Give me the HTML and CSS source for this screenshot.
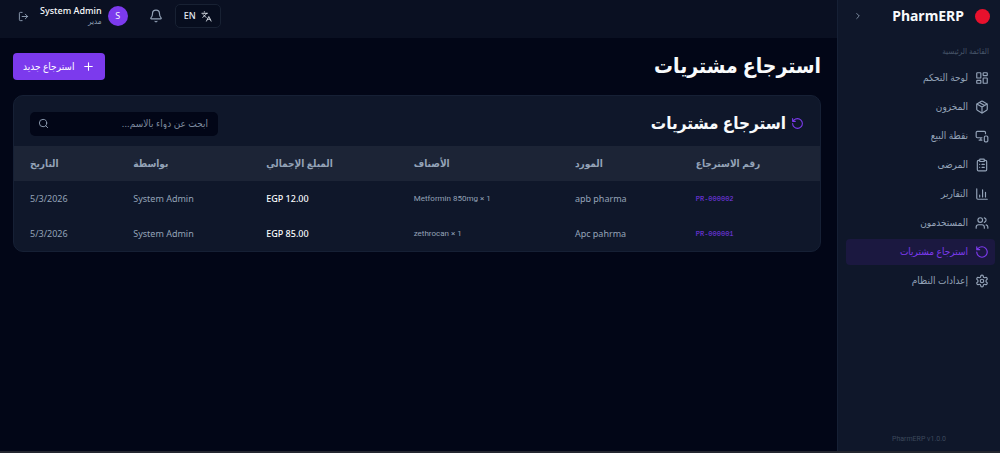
FILE: index.html
```html
<!DOCTYPE html>
<html lang="ar" dir="rtl">
<head>
<meta charset="utf-8">
<meta name="viewport" content="width=device-width, initial-scale=1">
<title>PharmERP</title>
<link rel="stylesheet" href="styles.css">
</head>
<body>
<div class="app">
  <aside class="sidebar">
    <div class="brand">
      <span class="brand-mark"></span>
      <span class="brand-name">PharmERP</span>
      <button class="icon-button collapse" type="button" aria-label="طي القائمة"><svg class="icon" viewBox="0 0 24 24"><path d="m9 18 6-6-6-6"/></svg></button>
    </div>
    <nav class="nav">
      <p class="nav-label">القائمة الرئيسية</p>
      <a class="nav-item" href="#"><svg class="icon" viewBox="0 0 24 24"><rect x="3" y="3" width="7" height="9" rx="1"/><rect x="14" y="3" width="7" height="5" rx="1"/><rect x="14" y="12" width="7" height="9" rx="1"/><rect x="3" y="16" width="7" height="5" rx="1"/></svg>لوحة التحكم</a>
      <a class="nav-item" href="#"><svg class="icon" viewBox="0 0 24 24"><path d="M11 21.7a2 2 0 0 0 2 0l7-4A2 2 0 0 0 21 16V8a2 2 0 0 0-1-1.7l-7-4a2 2 0 0 0-2 0l-7 4A2 2 0 0 0 3 8v8a2 2 0 0 0 1 1.7z"/><path d="M12 22V12M3.3 7 12 12l8.700-5M7.500 4.300l9 5.100"/></svg>المخزون</a>
      <a class="nav-item" href="#"><svg class="icon" viewBox="0 0 24 24"><path d="M18 8V6a2 2 0 0 0-2-2H4a2 2 0 0 0-2 2v7a2 2 0 0 0 2 2h8M10 19v-4M7 19h5"/><rect x="16" y="12" width="6" height="10" rx="2"/></svg>نقطة البيع</a>
      <a class="nav-item" href="#"><svg class="icon" viewBox="0 0 24 24"><rect x="8" y="2" width="8" height="4" rx="1"/><path d="M16 4h2a2 2 0 0 1 2 2v14a2 2 0 0 1-2 2H6a2 2 0 0 1-2-2V6a2 2 0 0 1 2-2h2M12 11h4M12 16h4M8 11h.01M8 16h.01"/></svg>المرضى</a>
      <a class="nav-item" href="#"><svg class="icon" viewBox="0 0 24 24"><path d="M3 3v16a2 2 0 0 0 2 2h16M8 17v-3M13 17V5M18 17V9"/></svg>التقارير</a>
      <a class="nav-item" href="#"><svg class="icon" viewBox="0 0 24 24"><path d="M16 21v-2a4 4 0 0 0-4-4H6a4 4 0 0 0-4 4v2M22 21v-2a4 4 0 0 0-3-3.870M16 3.130a4 4 0 0 1 0 7.750"/><circle cx="9" cy="7" r="4"/></svg>المستخدمون</a>
      <a class="nav-item active" href="#" aria-current="page"><svg class="icon" viewBox="0 0 24 24"><path d="M3 12a9 9 0 1 0 9-9 9.750 9.750 0 0 0-6.740 2.740L3 8M3 3v5h5"/></svg>استرجاع مشتريات</a>
      <a class="nav-item" href="#"><svg class="icon" viewBox="0 0 24 24"><path d="M12.220 2h-.44a2 2 0 0 0-2 2v.18a2 2 0 0 1-1 1.730l-.43.25a2 2 0 0 1-2 0l-.15-.08a2 2 0 0 0-2.730.73l-.22.38a2 2 0 0 0 .73 2.730l.15.1a2 2 0 0 1 1 1.720v.51a2 2 0 0 1-1 1.740l-.15.09a2 2 0 0 0-.73 2.730l.22.38a2 2 0 0 0 2.730.73l.15-.08a2 2 0 0 1 2 0l.43.25a2 2 0 0 1 1 1.730V20a2 2 0 0 0 2 2h.44a2 2 0 0 0 2-2v-.18a2 2 0 0 1 1-1.730l.43-.25a2 2 0 0 1 2 0l.15.08a2 2 0 0 0 2.730-.73l.22-.39a2 2 0 0 0-.73-2.730l-.15-.08a2 2 0 0 1-1-1.740v-.5a2 2 0 0 1 1-1.740l.15-.09a2 2 0 0 0 .73-2.730l-.22-.38a2 2 0 0 0-2.730-.73l-.15.08a2 2 0 0 1-2 0l-.43-.25a2 2 0 0 1-1-1.730V4a2 2 0 0 0-2-2z"/><circle cx="12" cy="12" r="3"/></svg>إعدادات النظام</a>
    </nav>
    <footer class="version" dir="ltr">PharmERP v1.0.0</footer>
  </aside>

  <div class="content">
    <header class="topbar">
      <button class="language" type="button"><svg class="icon" viewBox="0 0 24 24"><path d="m5 8 6 6M4 14l6-6 2-3M2 5h12M7 2h1M22 22l-5-10-5 10M14 18h6"/></svg>EN</button>
      <button class="icon-button bell" type="button" aria-label="الإشعارات"><svg class="icon" viewBox="0 0 24 24"><path d="M10.300 21a2 2 0 0 0 3.400 0M3.300 15.300A1 1 0 0 0 4 17h16a1 1 0 0 0 .7-1.700C19.400 14 18 12.500 18 8A6 6 0 0 0 6 8c0 4.500-1.400 6-2.700 7.300"/></svg></button>
      <div class="user">
        <span class="avatar">S</span>
        <div class="user-text"><span class="user-name">System Admin</span><span class="user-role">مدير</span></div>
      </div>
      <button class="icon-button logout" type="button" aria-label="تسجيل الخروج"><svg class="icon" viewBox="0 0 24 24"><path d="M9 21H5a2 2 0 0 1-2-2V5a2 2 0 0 1 2-2h4M16 17l5-5-5-5M21 12H9"/></svg></button>
    </header>

    <main class="page">
      <div class="page-head">
        <h1 class="page-title">استرجاع مشتريات</h1>
        <button class="primary" type="button"><svg class="icon" viewBox="0 0 24 24"><path d="M5 12h14M12 5v14"/></svg>استرجاع جديد</button>
      </div>
      <section class="card">
        <div class="card-head">
          <h2 class="card-title"><svg class="icon" viewBox="0 0 24 24"><path d="M3 12a9 9 0 1 0 9-9 9.750 9.750 0 0 0-6.740 2.740L3 8M3 3v5h5"/></svg>استرجاع مشتريات</h2>
          <label class="search"><input class="search-input" type="search" placeholder="ابحث عن دواء بالاسم..." aria-label="ابحث عن دواء بالاسم"><svg class="icon" viewBox="0 0 24 24"><circle cx="11" cy="11" r="8"/><path d="m21 21-4.300-4.300"/></svg></label>
        </div>
        <table class="returns">
          <colgroup><col class="col-number"><col class="col-supplier"><col class="col-items"><col class="col-total"><col class="col-by"><col class="col-date"></colgroup>
          <thead>
            <tr><th scope="col">رقم الاسترجاع</th><th scope="col">المورد</th><th scope="col">الأصناف</th><th scope="col">المبلغ الإجمالي</th><th scope="col">بواسطة</th><th scope="col">التاريخ</th></tr>
          </thead>
          <tbody>
            <tr><td class="number">PR-000002</td><td>apb pharma</td><td class="items"><bdi>Metformin 850mg × 1</bdi></td><td class="total"><bdi>EGP 12.00</bdi></td><td>System Admin</td><td><bdi dir="ltr">5/3/2026</bdi></td></tr>
            <tr><td class="number">PR-000001</td><td>Apc pahrma</td><td class="items"><bdi>zethrocan × 1</bdi></td><td class="total"><bdi>EGP 85.00</bdi></td><td>System Admin</td><td><bdi dir="ltr">5/3/2026</bdi></td></tr>
          </tbody>
        </table>
      </section>
    </main>
  </div>
</div>
</body>
</html>
```
FILE: styles.css
```css
:root {
  --bg: #020617;
  --panel: #0f172a;
  --line: #162035;
  --muted: #94a3b8;
  --dim: #475569;
  --accent: #7c3aed;
  --latin: "Noto Sans", sans-serif;
}

* { box-sizing: border-box; }

body {
  margin: 0;
  background: var(--bg);
  color: #f8fafc;
  font: 10px/14px Roboto, "DejaVu Sans Condensed", "DejaVu Sans", sans-serif;
}

button, input { font: inherit; color: inherit; }
button { cursor: pointer; }
h1, h2, p { margin: 0; }

.icon {
  width: 14px;
  height: 14px;
  flex: none;
  fill: none;
  stroke: currentColor;
  stroke-width: 2;
  stroke-linecap: round;
  stroke-linejoin: round;
}

.app {
  display: flex;
  min-height: 100vh;
  border-bottom: 2px solid #23262f;
}

.sidebar {
  display: flex;
  flex-direction: column;
  flex: 0 0 163px;
  background: var(--panel);
  border-left: 1px solid var(--line);
}

.brand {
  display: flex;
  align-items: center;
  gap: 11px;
  height: 32px;
  padding: 0 10px 0 15px;
}
.brand-mark {
  width: 15px;
  height: 15px;
  border-radius: 50%;
  background: #e8112d;
}
.brand-name { font: 700 14px/20px var(--latin); }

.icon-button {
  display: flex;
  padding: 0;
  border: 0;
  background: none;
  color: var(--muted);
}
.collapse { margin-right: auto; }
.collapse .icon { width: 10px; height: 10px; }

.nav {
  display: flex;
  flex-direction: column;
  gap: 3px;
  padding: 13px 5px 0 8px;
}
.nav-label {
  padding: 0 6px 3px;
  color: var(--dim);
  font-size: 8px;
}
.nav-item {
  display: flex;
  align-items: center;
  gap: 7px;
  height: 26px;
  padding: 0 6px;
  border-radius: 4px;
  color: var(--muted);
  text-decoration: none;
}
.nav-item.active { background: #1b1840; color: var(--accent); }

.version {
  margin-top: auto;
  padding-bottom: 5px;
  color: #3d495c;
  font-size: 7px;
  text-align: center;
}

.content { flex: 1; min-width: 0; }

.topbar {
  display: flex;
  align-items: center;
  height: 38px;
  padding: 0 16px 6px 18px;
  background: #0a1022;
}
.language {
  display: flex;
  align-items: center;
  gap: 5px;
  height: 24px;
  margin-right: auto;
  padding: 0 8px;
  border: 1px solid #182133;
  border-radius: 5px;
  background: #070d1e;
  color: #e2e8f0;
  font: 500 9px/14px var(--latin);
}
.language .icon { width: 11px; height: 11px; }
.bell { margin-right: 12px; }
.user {
  display: flex;
  align-items: center;
  gap: 6px;
  margin-right: 21px;
}
.avatar {
  display: grid;
  place-items: center;
  width: 20px;
  height: 20px;
  border-radius: 50%;
  background: var(--accent);
  font: 9px/14px var(--latin);
}
.user-text { display: flex; flex-direction: column; }
.user-name { font: 500 9px/12px var(--latin); }
.user-role { color: var(--muted); font-size: 8px; line-height: 10px; }
.logout { margin-right: 11px; }
.logout .icon { width: 11px; height: 11px; }

.page { padding: 15px 16px 15px 13px; }
.page-head {
  display: flex;
  align-items: center;
  justify-content: space-between;
  margin-bottom: 15px;
}
.page-title { font-size: 21px; line-height: 27px; font-weight: 700; }
.primary {
  display: flex;
  align-items: center;
  gap: 8px;
  height: 27px;
  padding: 0 10px;
  border: 0;
  border-radius: 4px;
  background: var(--accent);
  color: #fff;
  font-weight: 500;
}
.primary .icon { width: 13px; height: 13px; }

.card {
  overflow: hidden;
  background: var(--panel);
  border: 1px solid var(--line);
  border-radius: 10px;
}
.card-head {
  display: flex;
  align-items: center;
  justify-content: space-between;
  padding: 14px 16px 9px;
}
.card-title {
  display: flex;
  align-items: center;
  gap: 5px;
  font-size: 17px;
  line-height: 27px;
  font-weight: 700;
}
.card-title .icon { width: 13px; height: 13px; color: var(--accent); }

.search {
  display: flex;
  align-items: center;
  width: 188px;
  height: 24px;
  padding: 0 10px 0 8px;
  border-radius: 5px;
  background: var(--bg);
  color: var(--muted);
}
.search-input {
  flex: 1;
  min-width: 0;
  padding: 0;
  border: 0;
  outline: 0;
  background: none;
}
.search-input::placeholder { color: #7c899d; opacity: 1; }
.search .icon { width: 11px; height: 11px; }

.returns {
  width: 100%;
  table-layout: fixed;
  border-collapse: collapse;
}
.col-number { width: 17.4%; }
.col-supplier { width: 15%; }
.col-items { width: 20%; }
.col-total { width: 18.3%; }
.col-by { width: 16.5%; }
.col-date { width: 12.8%; }
.returns th {
  height: 35px;
  padding: 0 16px;
  background: #1c2436;
  color: var(--muted);
  text-align: left;
  font-weight: 700;
}
.returns td {
  height: 35px;
  padding: 0 16px;
  color: var(--muted);
  font: 9px/14px var(--latin);
  text-align: left;
  white-space: nowrap;
}
.returns .number {
  color: var(--accent);
  font-family: "Liberation Mono", monospace;
  font-size: 7px;
}
.returns .items { font: 8px/14px Roboto, sans-serif; }
.returns .total { color: #f8fafc; font-weight: 500; }
```
